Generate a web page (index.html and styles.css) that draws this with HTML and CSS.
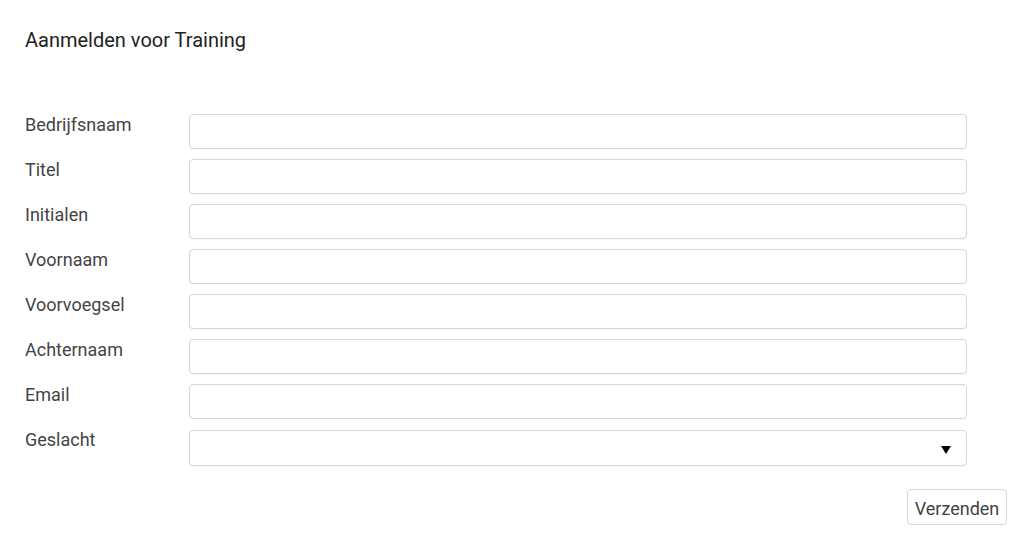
FILE: index.html
```html
<!DOCTYPE html>
<html lang="nl">
<head>
 <meta charset="UTF-8">
 <meta name="viewport" content="width=device-width, initial-scale=1.0">
 <title>Aanmelden voor Training</title>
 <link rel="stylesheet" href="styles.css">
</head>
<body>
<div class="page">
 <h1 class="page-title">Aanmelden voor Training</h1>
 <form class="signup-form" onsubmit="return false;">
   <div class="form-grid">
     <label for="company">Bedrijfsnaam</label>
     <input type="text" id="company" name="company">

     <label for="title">Titel</label>
     <input type="text" id="title" name="title">

     <label for="initials">Initialen</label>
     <input type="text" id="initials" name="initials">

     <label for="firstname">Voornaam</label>
     <input type="text" id="firstname" name="firstname">

     <label for="prefix">Voorvoegsel</label>
     <input type="text" id="prefix" name="prefix">

     <label for="lastname">Achternaam</label>
     <input type="text" id="lastname" name="lastname">

     <label for="email">Email</label>
     <input type="text" id="email" name="email">

     <label for="gender">Geslacht</label>
     <div class="select-wrap">
       <select id="gender" name="gender">
         <option value=""></option>
         <option value="m">Man</option>
         <option value="v">Vrouw</option>
       </select>
       <span class="select-arrow"></span>
     </div>
   </div>
   <div class="form-actions">
     <button type="submit">Verzenden</button>
   </div>
 </form>
</div>
</body>
</html>
```

FILE: styles.css
```css
body {
  font-family: Roboto, "Noto Sans", Arial, sans-serif;
  background-color: #ffffff;
  color: #333333;
  margin: 0;
  padding: 0;
}
.page {
  padding: 29px 17px 0 25px;
}
.page-title {
  font-size: 20px;
  font-weight: normal;
  color: #222222;
  margin: 0 0 62px 0;
  line-height: 23px;
}
.form-grid {
  display: grid;
  grid-template-columns: 164px 778px;
  row-gap: 10px;
}
.form-grid label {
  font-size: 18px;
  line-height: 21px;
  padding-top: 0;
  color: #444444;
}
.form-grid input,
.form-grid select {
  box-sizing: border-box;
  width: 100%;
  height: 35px;
  margin: 0;
  padding: 6px 10px;
  border: 1px solid #d6d6d6;
  border-radius: 4px;
  background-color: #ffffff;
  font-family: inherit;
  font-size: 16px;
  color: #333333;
  box-shadow: 0 1px 1px rgba(0, 0, 0, 0.03);
}
.select-wrap {
  position: relative;
}
.form-grid select {
  height: 36px;
  margin-top: 1px;
  -webkit-appearance: none;
  appearance: none;
}
.select-arrow {
  position: absolute;
  right: 16px;
  top: 17px;
  width: 0;
  height: 0;
  border-left: 5px solid transparent;
  border-right: 5px solid transparent;
  border-top: 8px solid #000000;
  pointer-events: none;
}
.form-actions {
  display: flex;
  justify-content: flex-end;
  margin-top: 23px;
}
.form-actions button {
  box-sizing: border-box;
  width: 100px;
  height: 36px;
  padding: 2px 0 0 0;
  border: 1px solid #d6d6d6;
  border-radius: 4px;
  background-color: #ffffff;
  font-family: inherit;
  font-size: 18px;
  color: #444444;
  cursor: pointer;
}
```
